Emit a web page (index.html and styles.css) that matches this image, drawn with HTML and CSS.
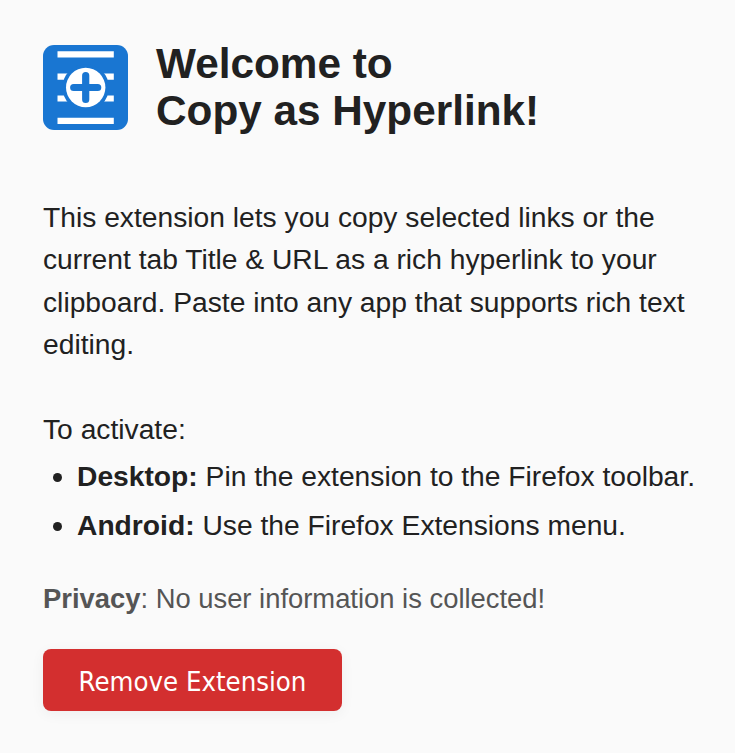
FILE: index.html
```html
<!DOCTYPE html>
<html lang="en">
<head>
<meta charset="utf-8">
<title>Welcome</title>
<link rel="stylesheet" href="styles.css">
</head>
<body>
<header class="header">
<svg class="logo" viewBox="0 0 85 85" aria-hidden="true">
<rect width="85" height="85" rx="11" fill="#1976d2"/>
<path d="M14.500 9.300H70.800M14.500 75.800H70.800M14.500 31.700H70.800M14.500 53.500H70.800" stroke="#fff" stroke-width="6.200"/>
<circle cx="42.700" cy="42.500" r="23.200" fill="#1976d2"/>
<circle cx="42.700" cy="42.500" r="19.700" fill="#fff"/>
<path d="M42.700 30.500V54.500M30.700 42.500H54.700" stroke="#1976d2" stroke-width="7.200" stroke-linecap="round"/>
</svg>
<h1 class="title">Welcome to<br>Copy as Hyperlink!</h1>
</header>
<main>
<p class="intro">This extension lets you copy selected links or the current tab Title &amp; URL as a rich hyperlink to your clipboard. Paste into any app that supports rich text editing.</p>
<p class="activate">To activate:</p>
<ul class="steps">
<li><strong>Desktop:</strong> Pin the extension to the Firefox toolbar.</li>
<li><strong>Android:</strong> Use the Firefox Extensions menu.</li>
</ul>
<p class="privacy"><strong>Privacy</strong>: No user information is collected!</p>
<button class="remove" type="button">Remove Extension</button>
</main>
</body>
</html>
```
FILE: styles.css
```css
* { box-sizing: border-box; }
body {
  margin: 0;
  padding: 40px 35px 42px 43px;
  background: #fafafa;
  color: #212121;
  font: 28.220px/42.400px "Liberation Sans", Arial, sans-serif;
}
.header { display: flex; align-items: center; gap: 28px; height: 95px; }
.logo { width: 85px; height: 85px; flex: none; }
.title { margin: -2px 0 0; font-size: 42.300px; line-height: 47px; white-space: nowrap; }
.intro { margin: 61px 0 0; }
.activate { margin: 42px 0 0; }
.steps { margin: 0; padding: 0 0 0 34px; white-space: nowrap; }
.steps li { height: 49px; line-height: 52px; }
.privacy { margin: 30px 0 0; color: #555; font-size: 27.380px; }
.remove {
  display: block;
  width: 299px;
  height: 62px;
  margin-top: 29px;
  padding: 2px 0 0;
  border: 0;
  border-radius: 8px;
  background: #d32f2f;
  color: #fff;
  font: 27.300px "DejaVu Sans Condensed", "DejaVu Sans", sans-serif;
  font-stretch: condensed;
  white-space: nowrap;
  box-shadow: 0 3px 14px rgba(0, 0, 0, .05);
}
```
